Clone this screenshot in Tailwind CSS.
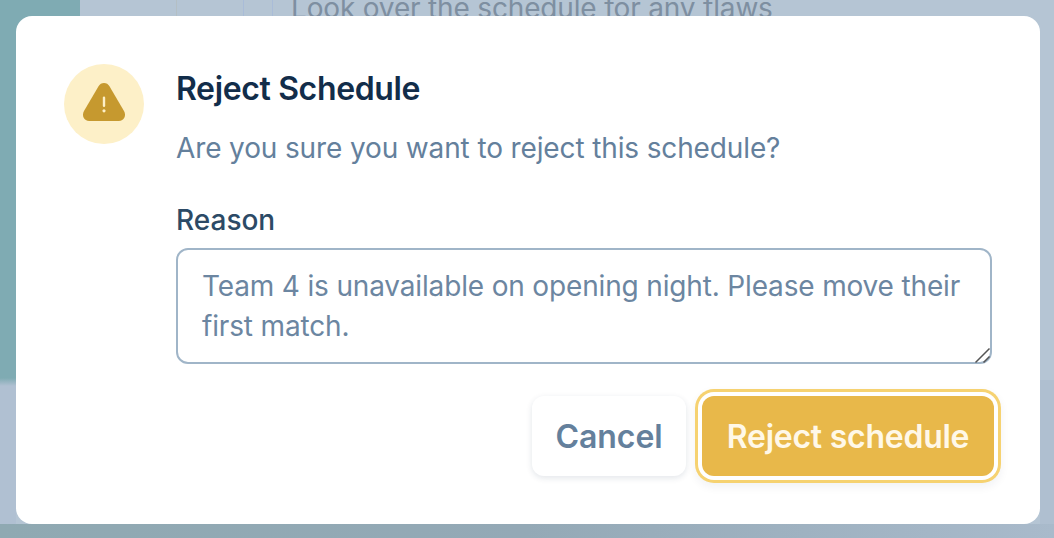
<!DOCTYPE html>
<html lang="en">
<head>
  <meta charset="UTF-8">
  <title>Reject Schedule</title>
  <script src="https://cdn.jsdelivr.net/npm/@tailwindcss/browser@4"></script>
</head>
<body class="bg-[#b5c5d4] overflow-hidden font-['Inter',sans-serif]">
  <div class="relative w-[1054px] h-[538px] overflow-hidden p-4">
    <!-- Page behind the overlay -->
    <div class="absolute left-0 top-0 w-[80px] h-[383px] bg-[#7fabb3]"></div>
    <div class="absolute left-0 top-[378px] w-[16px] h-[160px] bg-gradient-to-b from-[#7fabb3] via-[#b0c0d2] via-5% to-[#b0c0d2]"></div>
    <div class="absolute right-0 top-[380px] w-[14px] h-[158px] bg-[#afbfd0]"></div>
    <div class="absolute left-[176px] top-0 w-px h-4 bg-[#b4bfc4]"></div>
    <div class="absolute left-[243px] top-0 w-px h-4 bg-[#a9bcd8]"></div>
    <div class="absolute left-[272px] top-0 w-px h-4 bg-[#a9bcd8]"></div>
    <div class="absolute left-[291px] top-[-12px] text-[28px] leading-10 tracking-[-0.17px] text-[#7e8fa1] whitespace-nowrap">Look over the schedule for any flaws</div>
    <div class="absolute left-0 top-[524px] w-full h-[14px] bg-gradient-to-r from-[#8fa9b2] via-[#94a9b6] to-[#a9bacb]"></div>

    <!-- Modal -->
    <div class="relative w-[1024px] h-[508px] bg-white rounded-2xl p-12 flex gap-8">
      <div class="w-20 h-20 shrink-0 rounded-full bg-[#fdf0c8]">
        <svg width="80" height="80" viewBox="0 0 80 80" class="block">
          <path d="M40 19 C42.4 19 44.2 20.2 45.6 22.4 L60 47 C62.6 51.6 60 57 54.8 57 L25.2 57 C20 57 17.4 51.6 20 47 L34.4 22.4 C35.8 20.2 37.6 19 40 19 Z" fill="#c6992f"/>
          <rect x="38.8" y="32.5" width="2.4" height="10.5" rx="1.2" fill="#fdf0c8"/>
          <circle cx="40" cy="46.8" r="1.6" fill="#fdf0c8"/>
        </svg>
      </div>
      <div class="flex-1 flex flex-col">
        <h2 class="text-[32px] leading-[50px] tracking-[-0.36px] font-semibold text-[#122d4a]">Reject Schedule</h2>
        <p class="mt-[14px] text-[28px] leading-10 tracking-[-0.13px] text-[#64809c]">Are you sure you want to reject this schedule?</p>
        <label class="mt-[36px] text-[28px] leading-8 font-medium text-[#2c4a66]">Reason</label>
        <div class="relative mt-[12px] w-[816px] h-[116px]">
          <textarea class="block w-full h-full resize-none border-2 border-[#a0b5c8] rounded-xl px-6 py-[16px] text-[28px] leading-10 tracking-[-0.16px] text-[#6c86a1] outline-none">Team 4 is unavailable on opening night. Please move their first match.</textarea>
          <svg width="20" height="20" viewBox="0 0 20 20" class="absolute right-0 bottom-0">
            <path d="M3.5 18.5 L17.5 4.5 M11.5 18.5 L17.5 12.5" stroke="#555555" stroke-width="1.5" fill="none"/>
          </svg>
        </div>
        <div class="mt-[32px] flex justify-end gap-4 mr-[-2px]">
          <button class="h-20 w-[154px] pt-[2px] rounded-xl bg-white text-[32px] font-semibold text-[#64809c] tracking-[-0.05px] shadow-[0_2px_6px_rgba(15,42,71,0.12)]">Cancel</button>
          <button class="h-20 w-[292px] pt-[2px] rounded-xl bg-[#e8b84a] text-[32px] font-semibold tracking-[-0.25px] text-[#fff8e8] shadow-[0_0_0_4px_#ffffff,0_0_0_7px_#f6d271,0_4px_10px_7px_rgba(15,42,71,0.06)]">Reject schedule</button>
        </div>
      </div>
    </div>
  </div>
</body>
</html>
